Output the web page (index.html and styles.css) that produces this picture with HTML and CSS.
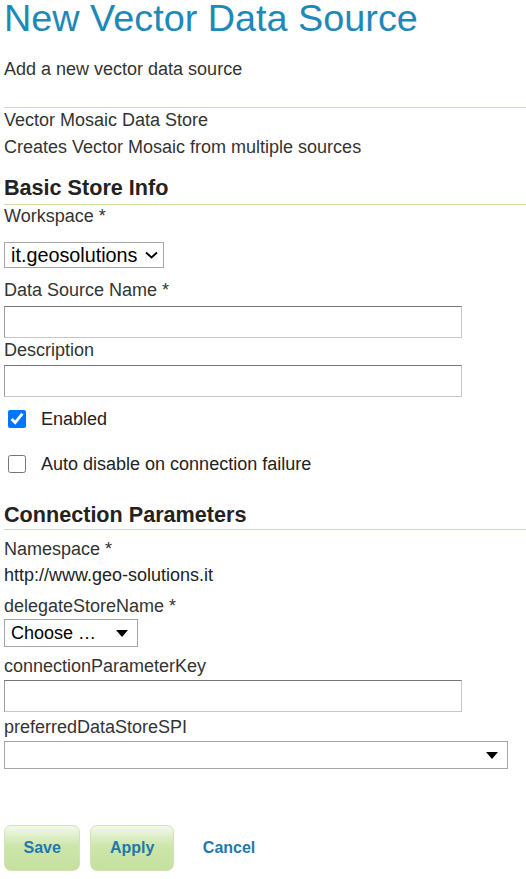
FILE: index.html
```html
<!DOCTYPE html>
<html lang="en">
<head>
<meta charset="utf-8">
<title>New Vector Data Source</title>
<link rel="stylesheet" href="styles.css">
</head>
<body>
<div class="page">
  <h1 class="title">New Vector Data Source</h1>
  <p class="intro">Add a new vector data source</p>

  <div class="store">
    <p>Vector Mosaic Data Store</p>
    <p class="store-desc">Creates Vector Mosaic from multiple sources</p>
  </div>

  <form class="form">
    <h2 class="section-title">Basic Store Info</h2>
    <label class="label gap-1">Workspace *</label>
    <div class="select select-ws gap-16">
      <select class="select-native"><option>it.geosolutions</option></select>
      <svg class="chevron" width="13" height="8" viewBox="0 0 13 8"><polyline points="1,1.5 6.5,6.5 12,1.5" fill="none" stroke="#000" stroke-width="1.9"/></svg>
    </div>

    <label class="label gap-12">Data Source Name *</label>
    <input class="text-input gap-6" type="text">

    <label class="label gap-2">Description</label>
    <input class="text-input gap-5" type="text">

    <div class="check-row gap-12">
      <input class="check" type="checkbox" checked>
      <span class="check-label">Enabled</span>
    </div>
    <div class="check-row gap-25">
      <input class="check" type="checkbox">
      <span class="check-label">Auto disable on connection failure</span>
    </div>

    <h2 class="section-title section-title-tight gap-29">Connection Parameters</h2>
    <label class="label gap-9">Namespace *</label>
    <p class="value gap-6">http://www.geo-solutions.it</p>

    <label class="label gap-11">delegateStoreName *</label>
    <div class="select select-choose gap-3">
      <select class="select-native"><option>Choose …</option></select>
      <svg class="tri" width="12" height="7" viewBox="0 0 12 7"><polygon points="0,0 12,0 6,7" fill="#000"/></svg>
    </div>

    <label class="label gap-9">connectionParameterKey</label>
    <input class="text-input gap-4" type="text">

    <label class="label gap-5">preferredDataStoreSPI</label>
    <div class="select select-wide gap-4">
      <select class="select-native"><option></option></select>
      <svg class="tri" width="12" height="7" viewBox="0 0 12 7"><polygon points="0,0 12,0 6,7" fill="#000"/></svg>
    </div>

    <div class="actions">
      <button class="btn" type="button">Save</button>
      <button class="btn" type="button">Apply</button>
      <a class="cancel" href="#">Cancel</a>
    </div>
  </form>
</div>
</body>
</html>
```
FILE: styles.css
```css
html, body {
  margin: 0;
  padding: 0;
  background: #fff;
}
body {
  font-family: "Liberation Sans", Arial, sans-serif;
  font-size: 18px;
  line-height: 20px;
  color: #333;
}
.page {
  padding-left: 4px;
}
.title {
  margin: 0;
  font-size: 37.8px;
  line-height: 36px;
  font-weight: normal;
  color: #1e88b9;
}
.intro {
  margin: 23px 0 0;
}
.store {
  margin-top: 28px;
  padding-top: 2px;
  border-top: 1px solid #c8e2a8;
}
.store p {
  margin: 0;
}
.store .store-desc {
  margin-top: 7px;
}
.form {
  margin: 0;
}
.section-title {
  margin: 19px 0 0;
  padding-bottom: 4px;
  font-size: 21.6px;
  line-height: 24px;
  font-weight: bold;
  color: #222;
  border-bottom: 1px solid #c8e2a8;
}
.section-title-tight {
  padding-bottom: 2px;
}
.label {
  display: block;
}
.value {
  margin: 0;
  color: #222;
}
.text-input {
  display: block;
  box-sizing: border-box;
  width: 458px;
  height: 32px;
  margin-bottom: 0;
  margin-left: 0;
  margin-right: 0;
  padding: 0 4px;
  border-style: solid;
  border-width: 1px;
  border-color: #767676 #c6c6c6 #c6c6c6 #9c9c9c;
  background: #fff;
  font: inherit;
}
.select {
  display: flex;
  align-items: center;
  box-sizing: border-box;
  border: 1px solid #a6a6a6;
  background: #fff;
}
.select-native {
  flex: 1;
  min-width: 0;
  appearance: none;
  -webkit-appearance: none;
  border: none;
  outline: none;
  background: transparent;
  margin: 0;
  padding: 0 0 0 6px;
  font-family: "Liberation Sans", Arial, sans-serif;
  font-size: 18px;
  color: #000;
}
.select-ws {
  width: 160px;
  height: 26px;
}
.select-ws .select-native {
  font-size: 19.8px;
}
.select-ws .chevron {
  margin-right: 5px;
  flex-shrink: 0;
}
.select-choose {
  width: 134px;
  height: 28px;
}
.select-wide {
  width: 504px;
  height: 28px;
}
.tri {
  margin-right: 9px;
  flex-shrink: 0;
}
.check-row {
  display: flex;
  align-items: center;
  height: 20px;
}
.check {
  width: 18px;
  height: 18px;
  margin: 0 0 0 4px;
}
.check-label {
  margin-left: 15px;
  color: #222;
}
.actions {
  display: flex;
  align-items: center;
  margin-top: 56px;
}
.btn {
  height: 46px;
  padding: 0 18.5px;
  margin: 0 10px 0 0;
  box-sizing: border-box;
  border: 1px solid #cfe5b4;
  border-radius: 7px;
  background: linear-gradient(to bottom, #f1f9ea 0%, #cde6ab 45%, #c5e09e 100%);
  font-family: "Liberation Sans", Arial, sans-serif;
  font-size: 16px;
  font-weight: bold;
  color: #1f78ad;
}
.cancel {
  margin-left: 19px;
  font-size: 16px;
  font-weight: bold;
  color: #1f78ad;
  text-decoration: none;
}
.gap-1 { margin-top: 1px; }
.gap-2 { margin-top: 2px; }
.gap-3 { margin-top: 3px; }
.gap-4 { margin-top: 4px; }
.gap-5 { margin-top: 5px; }
.gap-6 { margin-top: 6px; }
.gap-9 { margin-top: 9px; }
.gap-11 { margin-top: 11px; }
.gap-12 { margin-top: 12px; }
.gap-16 { margin-top: 16px; }
.gap-25 { margin-top: 25px; }
.gap-29 { margin-top: 29px; }
```
